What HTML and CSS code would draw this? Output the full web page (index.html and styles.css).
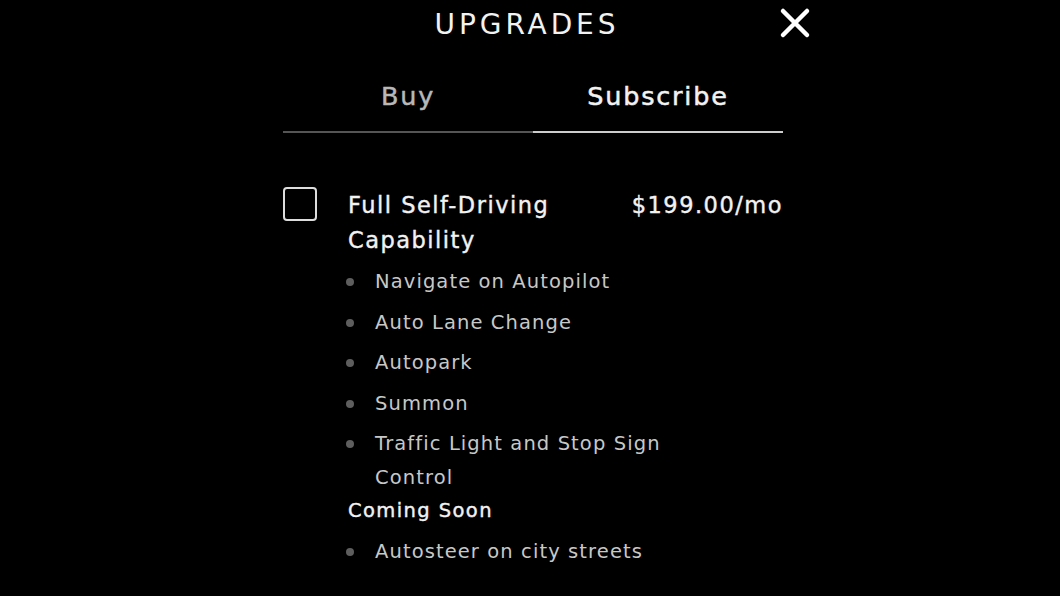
FILE: index.html
```html
<!DOCTYPE html>
<html lang="en">
<head>
    <meta charset="UTF-8">
    <title>Upgrades</title>
    <link rel="stylesheet" href="styles.css">
</head>
<body>
    <div class="panel">
        <div class="header">
            <h1 class="title">UPGRADES</h1>
            <button class="close" aria-label="Close">
                <svg width="32" height="32" viewBox="0 0 32 32"><path d="M4 4 L28 28 M28 4 L4 28" stroke="#fff" stroke-width="4.5" stroke-linecap="round"/></svg>
            </button>
        </div>
        <div class="tabs">
            <div class="tab">Buy</div>
            <div class="tab active">Subscribe</div>
        </div>
        <div class="option">
            <div class="checkbox"></div>
            <div class="option-body">
                <div class="option-head">
                    <div class="option-name">Full Self-Driving<br>Capability</div>
                    <div class="price">$199.00/mo</div>
                </div>
                <ul class="features">
                    <li>Navigate on Autopilot</li>
                    <li>Auto Lane Change</li>
                    <li>Autopark</li>
                    <li>Summon</li>
                    <li>Traffic Light and Stop Sign<br>Control</li>
                </ul>
                <div class="soon">Coming Soon</div>
                <ul class="features">
                    <li>Autosteer on city streets</li>
                </ul>
            </div>
        </div>
    </div>
</body>
</html>
```

FILE: styles.css
```css
body {
    margin: 0;
    background: #000;
    color: #eee;
    font-family: "DejaVu Sans", "Open Sans", sans-serif;
}
.panel {
    width: 500px;
    margin-left: 283px;
}
.header {
    position: relative;
    height: 48px;
    display: flex;
    justify-content: center;
    align-items: center;
}
.title {
    margin: 0 12px 0 0;
    font-size: 28px;
    font-weight: 400;
    letter-spacing: 3.9px;
    color: #f2f2f2;
}
.close {
    position: absolute;
    right: -28px;
    top: 7px;
    background: none;
    border: 0;
    padding: 0;
}
.tabs {
    display: flex;
    margin-top: 33px;
}
.tab {
    flex: 1;
    text-align: center;
    font-size: 25.5px;
    letter-spacing: 1.8px;
    color: #b8b8b8;
    padding-bottom: 20px;
    border-bottom: 2px solid #555;
    -webkit-text-stroke: 0.5px #b8b8b8;
}
.tab.active {
    color: #f2f2f2;
    border-bottom-color: #ccc;
    -webkit-text-stroke-color: #f2f2f2;
}
.option {
    display: flex;
    gap: 31px;
    margin-top: 54px;
}
.checkbox {
    flex: none;
    width: 30px;
    height: 30px;
    border: 2px solid #ddd;
    border-radius: 4px;
}
.option-body {
    flex: 1;
}
.option-head {
    display: flex;
    justify-content: space-between;
    font-size: 22.5px;
    letter-spacing: 1.5px;
    line-height: 35px;
    margin-top: 1px;
    color: #f2f2f2;
    -webkit-text-stroke: 0.4px #f2f2f2;
}
.features {
    list-style: none;
    margin: 7px 0 0;
    padding: 0;
}
.features li {
    position: relative;
    padding-left: 27px;
    font-size: 19.5px;
    letter-spacing: 1.1px;
    line-height: 34px;
    margin-bottom: 6.5px;
    color: #c8c8c8;
}
.features li::before {
    content: "";
    position: absolute;
    left: -2px;
    top: 13px;
    width: 8px;
    height: 8px;
    border-radius: 50%;
    background: #5e5e5e;
}
.soon {
    font-size: 19.5px;
    letter-spacing: 1.4px;
    line-height: 34px;
    margin-top: -8px;
    color: #f2f2f2;
    -webkit-text-stroke: 0.4px #f2f2f2;
}
```
